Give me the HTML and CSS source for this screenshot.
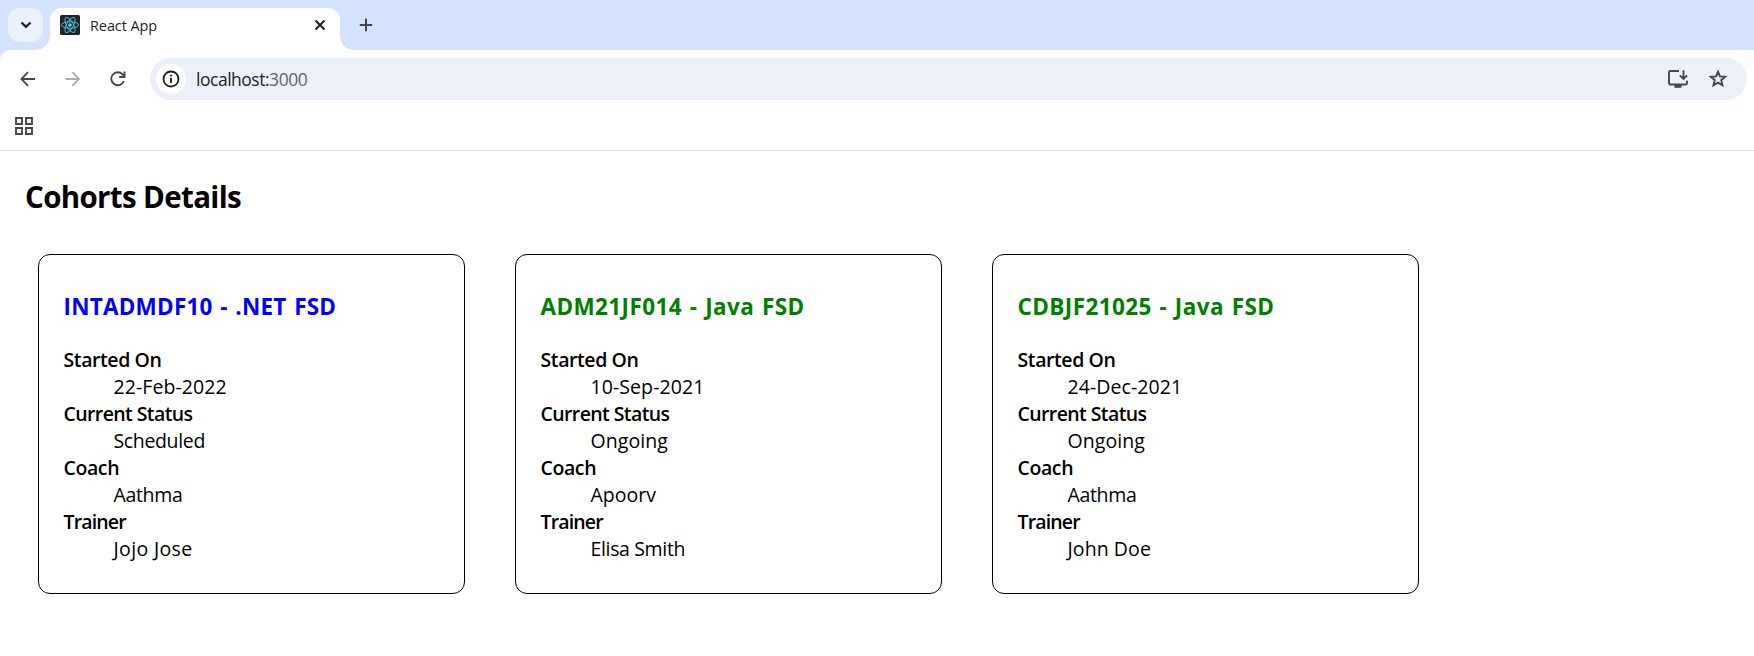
FILE: index.html
```html
<!DOCTYPE html>
<html lang="en">
<head>
<meta charset="utf-8">
<title>React App</title>
<link rel="stylesheet" href="styles.css">
</head>
<body>
<header class="browser">
  <div class="tabstrip">
    <button class="tab-search" aria-label="Search tabs"><svg width="12" height="8" viewBox="0 0 12 8"><path d="M1.5 1.5 6 5.8 10.5 1.5" fill="none" stroke="#1f1f1f" stroke-width="2.3"/></svg></button>
    <div class="tab">
      <svg class="favicon" width="20" height="20" viewBox="0 0 20 20"><rect width="20" height="20" rx="1.5" fill="#20232a"/><g fill="none" stroke="#55b5cd" stroke-width="1"><ellipse cx="10" cy="10" rx="8.5" ry="3.3"/><ellipse cx="10" cy="10" rx="8.5" ry="3.3" transform="rotate(60 10 10)"/><ellipse cx="10" cy="10" rx="8.5" ry="3.3" transform="rotate(120 10 10)"/></g><circle cx="10" cy="10" r="1.7" fill="#61dafb"/></svg>
      <span class="tab-title">React App</span>
      <svg class="close" width="12" height="12" viewBox="0 0 12 12"><path d="M1.5 1.5 10.5 10.5M10.5 1.5 1.5 10.5" stroke="#1f1f1f" stroke-width="2"/></svg>
    </div>
    <svg class="plus" width="14" height="14" viewBox="0 0 14 14"><path d="M7 .8V13.2M.8 7H13.2" stroke="#444746" stroke-width="2"/></svg>
  </div>
  <div class="toolbar">
    <div class="nav">
      <svg width="16" height="16" viewBox="0 0 16 16"><path d="M15 8H1.8M8 1.2 1.4 8 8 14.8" fill="none" stroke="#474747" stroke-width="1.8"/></svg>
      <svg width="16" height="16" viewBox="0 0 16 16"><path d="M.4 8H13.6M7.4 1.2 14 8 7.4 14.8" fill="none" stroke="#ababab" stroke-width="1.8"/></svg>
      <svg width="16" height="16" viewBox="0 0 16 16"><path d="M13.9 10A6.5 6.5 0 1 1 12.6 3.4L14.5 5.6" fill="none" stroke="#474747" stroke-width="1.9"/><path d="M14.5.6V6H9.2" fill="none" stroke="#474747" stroke-width="1.9"/></svg>
    </div>
    <div class="omnibox">
      <span class="info"><svg width="18" height="18" viewBox="0 0 18 18"><circle cx="9" cy="9" r="7.5" fill="none" stroke="#1f1f1f" stroke-width="1.8"/><path d="M9 7.9V13M9 4.7V6.5" stroke="#1f1f1f" stroke-width="1.9"/></svg></span>
      <span class="url">localhost:<span class="port">3000</span></span>
      <svg class="install" width="22" height="20" viewBox="0 0 22 20"><path d="M12 2H3.2Q2 2 2 3.2V14.3Q2 15.5 3.2 15.5H18.8Q20 15.5 20 14.3V11.7" fill="none" stroke="#474747" stroke-width="1.9"/><path d="M7.5 15H14.5V18.8H7.5Z" fill="#474747"/><path d="M16.5 1.2V9.5M12.8 6.3 16.5 10 20.2 6.3" fill="none" stroke="#474747" stroke-width="1.9"/></svg>
      <svg class="star" width="20" height="20" viewBox="0 0 20 20"><path d="M10 2.6 12 7.4 17.2 7.8 13.2 11.2 14.5 16.3 10 13.6 5.5 16.3 6.8 11.2 2.8 7.8 8 7.4Z" fill="none" stroke="#474747" stroke-width="1.9"/></svg>
    </div>
  </div>
  <div class="bookmarks"><svg width="18" height="18" viewBox="0 0 18 18"><path d="M1 1H7V7H1ZM11 1H17V7H11ZM1 11H7V17H1ZM11 11H17V17H11Z" fill="none" stroke="#474747" stroke-width="1.9"/></svg></div>
</header>
<main class="page">
  <h2 class="heading">Cohorts Details</h2>
  <div class="cards">
    <section class="card">
      <h3 class="title scheduled">INTADMDF10 - .NET FSD</h3>
      <dl class="details">
        <dt>Started On</dt><dd class="date">22-Feb-2022</dd>
        <dt class="status-label">Current Status</dt><dd class="tight">Scheduled</dd>
        <dt>Coach</dt><dd class="tight">Aathma</dd>
        <dt class="trainer-label">Trainer</dt><dd class="loose">Jojo Jose</dd>
      </dl>
    </section>
    <section class="card">
      <h3 class="title ongoing">ADM21JF014 - Java FSD</h3>
      <dl class="details">
        <dt>Started On</dt><dd class="date">10-Sep-2021</dd>
        <dt class="status-label">Current Status</dt><dd class="date">Ongoing</dd>
        <dt>Coach</dt><dd>Apoorv</dd>
        <dt class="trainer-label">Trainer</dt><dd class="tight">Elisa Smith</dd>
      </dl>
    </section>
    <section class="card">
      <h3 class="title ongoing">CDBJF21025 - Java FSD</h3>
      <dl class="details">
        <dt>Started On</dt><dd class="date">24-Dec-2021</dd>
        <dt class="status-label">Current Status</dt><dd class="date">Ongoing</dd>
        <dt>Coach</dt><dd class="tight">Aathma</dd>
        <dt class="trainer-label">Trainer</dt><dd class="date">John Doe</dd>
      </dl>
    </section>
  </div>
</main>
</body>
</html>
```
FILE: styles.css
```css
* { box-sizing: border-box; }
body { margin: 0; background: #fff; color: #000; font-family: "Open Sans", "Noto Sans", sans-serif; font-size: 20px; overflow: hidden; }
svg { display: block; flex: none; }

/* Browser chrome */
.browser { height: 151px; border-bottom: 1px solid #dcdcdc; background: linear-gradient(#d3e2fd 60px, #fff 60px); }
.tabstrip { height: 50px; display: flex; padding: 8px 0 0 8px; }
.tab-search { width: 35px; height: 34px; border: 0; border-radius: 12px; background: #ebf2fe; display: grid; place-items: center; padding: 0; }
.tab { position: relative; width: 290px; height: 42px; margin-left: 7px; padding: 0 14px 8px 10px; background: #fff; border-radius: 12px 12px 0 0; display: flex; align-items: center; }
.tab::before, .tab::after { content: ""; position: absolute; bottom: 0; width: 14px; height: 14px; }
.tab::before { left: -14px; background: radial-gradient(circle at 0 0, transparent 13.5px, #fff 14px); }
.tab::after { right: -14px; background: radial-gradient(circle at 100% 0, transparent 13.5px, #fff 14px); }
.tab-title { margin-left: 10px; font-size: 14.5px; letter-spacing: -.1px; color: #1f1f1f; flex: 1; white-space: nowrap; }
.plus { margin: 10px 0 0 19px; }
.toolbar { height: 50px; background: #fff; border-radius: 10px 0 0 0; display: flex; align-items: center; padding: 8px 7px 0 20px; }
.nav { display: flex; gap: 29px; width: 130px; }
.omnibox { flex: 1; height: 42px; border-radius: 21px; background: #ebf0f9; display: flex; align-items: center; padding: 0 19px 0 6px; }
.info { width: 30px; height: 30px; border-radius: 50%; background: #fff; display: grid; place-items: center; }
.url { margin-left: 10px; flex: 1; font-size: 17.5px; letter-spacing: -.48px; color: #1f1f1f; }
.port { color: #5f6368; }
.star { margin-left: 19px; }
.bookmarks { padding: 17px 0 0 15px; }

/* Page content */
.page { padding: 25px 24px 0; }
.heading { margin: 0 0 0 1px; font-size: 29.5px; line-height: 42px; letter-spacing: -.65px; }
.cards { display: flex; gap: 50px; padding: 36px 0 0 14px; }
.card { width: 427px; height: 340px; border: 1px solid #000; border-radius: 12px; padding: 36px 24.5px 0; }
.title { margin: 0; font-size: 22.5px; line-height: 32px; white-space: nowrap; word-spacing: 1.5px; }
.scheduled { color: #00f; letter-spacing: .23px; }
.ongoing { color: #008000; letter-spacing: .4px; }
.details { margin: 23px 0 0; line-height: 27px; font-size: 19.5px; }
.details dt { font-weight: 600; letter-spacing: -.4px; }
.details .status-label { letter-spacing: -.6px; }
.details .trainer-label { letter-spacing: -.85px; }
.details dd { margin: 0 0 0 50px; }
.details .date { letter-spacing: .08px; }
.details .tight { letter-spacing: -.35px; }
.details .loose { letter-spacing: .35px; }
```
